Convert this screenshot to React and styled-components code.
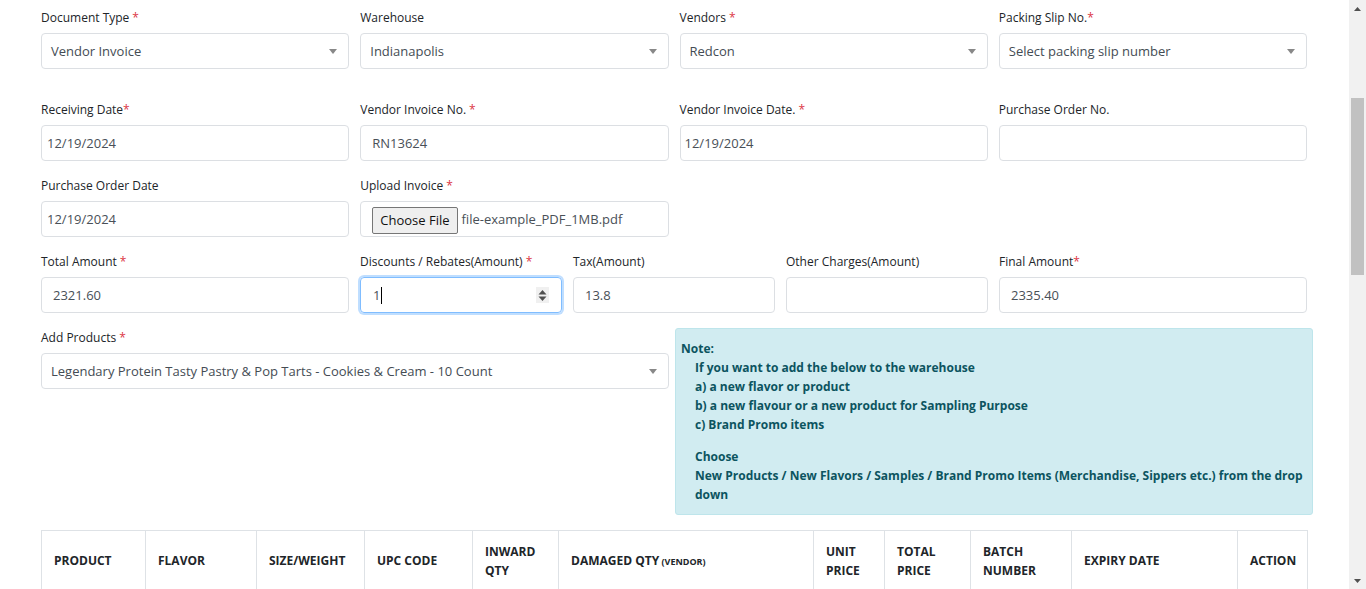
import React from 'react';
import styled, { createGlobalStyle } from 'styled-components';

const GlobalStyle = createGlobalStyle`
  html, body {
    margin: 0;
    padding: 0;
    overflow: hidden;
    background: #fff;
  }
  body {
    font-family: 'Open Sans', 'Noto Sans', sans-serif;
    color: #212529;
  }
  * {
    box-sizing: border-box;
  }
`;

const Screen = styled.div`
  display: flex;
  height: 589px;
  width: 1366px;
  overflow: hidden;
`;

const Main = styled.div`
  flex: 1;
  padding: 8px 42px 0 41px;
  overflow: hidden;
`;

const Form = styled.div`
  display: flex;
  flex-direction: column;
  gap: 15px;
`;

const Row = styled.div`
  display: grid;
  grid-template-columns: ${p => p.$cols || 'repeat(4, 1fr)'};
  column-gap: 11px;
  margin-bottom: ${p => p.$extra || 0}px;
`;

const Field = styled.div`
  display: flex;
  flex-direction: column;
  min-width: 0;
`;

const Label = styled.label`
  font-size: 12px;
  line-height: 20px;
  height: 20px;
  margin-bottom: 5px;
  color: #212529;
  white-space: nowrap;
`;

const Req = styled.span`
  color: #dc3545;
  margin-left: ${p => (p.$tight ? 0 : 3)}px;
`;

const Input = styled.input`
  height: 36px;
  width: 100%;
  border: 1px solid #dcdfe3;
  border-radius: 4px;
  padding: 0 ${p => p.$pad ?? 11}px;
  font-family: inherit;
  font-size: 13px;
  color: #495057;
  background: #fff;
  outline: none;
`;

const SelectBox = styled.div`
  height: 36px;
  display: flex;
  align-items: center;
  justify-content: space-between;
  border: 1px solid #dcdfe3;
  border-radius: 4px;
  padding: 0 10px 0 9px;
  font-size: 13px;
  color: #444c54;
  background: #fff;
  white-space: nowrap;
`;

const Arrow = styled.span`
  width: 0;
  height: 0;
  border-style: solid;
  border-width: 5px 4px 0 4px;
  border-color: #888 transparent transparent transparent;
  margin-right: 1px;
`;

const FileBox = styled.div`
  height: 36px;
  display: flex;
  align-items: center;
  border: 1px solid #dcdfe3;
  border-radius: 4px;
  padding: 0 11px;
  font-size: 13px;
  color: #495057;
  gap: 4px;
`;

const FileButton = styled.button`
  height: 27px;
  padding: 0 7px;
  border: 1px solid #767676;
  border-radius: 2px;
  background: #efefef;
  font-family: inherit;
  font-size: 13px;
  color: #111;
  margin: 2px 0 0 0;
`;

const FocusBox = styled.div`
  height: 36px;
  display: flex;
  align-items: center;
  border: 1px solid #80bdff;
  border-radius: 4px;
  box-shadow: 0 0 0 2px rgba(0, 123, 255, 0.25);
  padding: 0 12px 0 12px;
  font-size: 13px;
  color: #495057;
`;

const Caret = styled.span`
  display: inline-block;
  width: 1px;
  height: 17px;
  background: #000;
  margin-left: 1px;
`;

const Spinner = styled.span`
  margin-left: auto;
  display: flex;
  align-items: center;
  justify-content: center;
  width: 13px;
  height: 16px;
  background: #f0f0f0;
`;

const ProductRow = styled.div`
  display: grid;
  grid-template-columns: 628px 1fr;
  column-gap: 6px;
  margin-right: -6px;
  align-items: start;
`;

const Note = styled.div`
  background: #d1ecf1;
  border: 1px solid #bee5eb;
  border-radius: 3px;
  color: #0c5460;
  font-size: 12px;
  font-weight: 700;
  line-height: 19px;
  padding: 10px 8px 10px 5px;
`;

const NoteBody = styled.div`
  padding-left: 14px;
`;

const NoteGap = styled.div`
  height: 13px;
`;

const Table = styled.table`
  width: 100%;
  border-collapse: collapse;
  table-layout: fixed;
`;

const Th = styled.th`
  width: ${p => p.$w}px;
  height: 60px;
  border: 1px solid #dee2e6;
  padding: 0 12px;
  text-align: left;
  vertical-align: middle;
  font-size: 12px;
  font-weight: 700;
  line-height: 19px;
  color: #212529;
  text-transform: uppercase;
`;

const Small = styled.span`
  font-size: 9px;
`;

const ScrollTrack = styled.div`
  width: 17px;
  background: #f1f1f1;
  display: flex;
  flex-direction: column;
`;

const ScrollBtn = styled.div`
  height: 17px;
  display: flex;
  align-items: center;
  justify-content: center;
`;

const ScrollRail = styled.div`
  flex: 1;
`;

const Thumb = styled.div`
  margin: 81px 2px 0 2px;
  height: 177px;
  background: #c1c1c1;
`;

const Select = ({ value }) => (
  <SelectBox>
    <span>{value}</span>
    <Arrow />
  </SelectBox>
);

const FieldLabel = ({ text, req, tight }) => (
  <Label>
    {text}
    {req && <Req $tight={tight}>*</Req>}
  </Label>
);

const headers = [
  ['Product', 104],
  ['Flavor', 111],
  ['Size/Weight', 108],
  ['UPC Code', 108],
  ['Inward Qty', 86],
  ['Damaged Qty', 255, 'small'],
  ['Unit Price', 71],
  ['Total Price', 86],
  ['Batch Number', 101],
  ['Expiry Date', 166],
  ['Action', 70],
];

export default function App() {
  return (
    <>
      <GlobalStyle />
      <Screen>
        <Main>
          <Form>
            <Row $extra={16}>
              <Field>
                <FieldLabel text="Document Type" req />
                <Select value="Vendor Invoice" />
              </Field>
              <Field>
                <FieldLabel text="Warehouse" />
                <Select value="Indianapolis" />
              </Field>
              <Field>
                <FieldLabel text="Vendors" req />
                <Select value="Redcon" />
              </Field>
              <Field>
                <FieldLabel text="Packing Slip No." req tight />
                <Select value="Select packing slip number" />
              </Field>
            </Row>

            <Row>
              <Field>
                <FieldLabel text="Receiving Date" req tight />
                <Input $pad={5} readOnly value="12/19/2024" />
              </Field>
              <Field>
                <FieldLabel text="Vendor Invoice No." req />
                <Input readOnly value="RN13624" />
              </Field>
              <Field>
                <FieldLabel text="Vendor Invoice Date." req />
                <Input $pad={4} readOnly value="12/19/2024" />
              </Field>
              <Field>
                <FieldLabel text="Purchase Order No." />
                <Input readOnly value="" />
              </Field>
            </Row>

            <Row>
              <Field>
                <FieldLabel text="Purchase Order Date" />
                <Input $pad={5} readOnly value="12/19/2024" />
              </Field>
              <Field>
                <FieldLabel text="Upload Invoice" req />
                <FileBox>
                  <FileButton type="button">Choose File</FileButton>
                  <span>file-example_PDF_1MB.pdf</span>
                </FileBox>
              </Field>
            </Row>

            <Row $cols="308px 202px 202px 202px 1fr">
              <Field>
                <FieldLabel text="Total Amount" req />
                <Input readOnly value="2321.60" />
              </Field>
              <Field>
                <FieldLabel text="Discounts / Rebates(Amount)" req />
                <FocusBox>
                  <span>1</span>
                  <Caret />
                  <Spinner>
                    <svg width="9" height="13" viewBox="0 0 9 13">
                      <path d="M4.5 1 L8.5 5.5 L0.5 5.5 Z" fill="#505050" />
                      <path d="M0.5 7.5 L8.5 7.5 L4.5 12 Z" fill="#505050" />
                    </svg>
                  </Spinner>
                </FocusBox>
              </Field>
              <Field>
                <FieldLabel text="Tax(Amount)" />
                <Input readOnly value="13.8" />
              </Field>
              <Field>
                <FieldLabel text="Other Charges(Amount)" />
                <Input readOnly value="" />
              </Field>
              <Field>
                <FieldLabel text="Final Amount" req tight />
                <Input readOnly value="2335.40" />
              </Field>
            </Row>

            <ProductRow>
              <Field>
                <FieldLabel text="Add Products" req />
                <Select value="Legendary Protein Tasty Pastry & Pop Tarts - Cookies & Cream - 10 Count" />
              </Field>
              <Note>
                <div>Note:</div>
                <NoteBody>
                  <div>If you want to add the below to the warehouse</div>
                  <div>a) a new flavor or product</div>
                  <div>b) a new flavour or a new product for Sampling Purpose</div>
                  <div>c) Brand Promo items</div>
                  <NoteGap />
                  <div>Choose</div>
                  <div>
                    New Products / New Flavors / Samples / Brand Promo Items (Merchandise, Sippers etc.) from the drop down
                  </div>
                </NoteBody>
              </Note>
            </ProductRow>

            <Table>
              <thead>
                <tr>
                  {headers.map(([name, w, extra]) => (
                    <Th key={name} $w={w}>
                      {name}
                      {extra && <Small> (Vendor)</Small>}
                    </Th>
                  ))}
                </tr>
              </thead>
            </Table>
          </Form>
        </Main>

        <ScrollTrack>
          <ScrollBtn>
            <svg width="7" height="4" viewBox="0 0 7 4">
              <path d="M3.5 0 L7 4 L0 4 Z" fill="#505050" />
            </svg>
          </ScrollBtn>
          <ScrollRail>
            <Thumb />
          </ScrollRail>
          <ScrollBtn>
            <svg width="7" height="4" viewBox="0 0 7 4">
              <path d="M0 0 L7 0 L3.5 4 Z" fill="#505050" />
            </svg>
          </ScrollBtn>
        </ScrollTrack>
      </Screen>
    </>
  );
}
